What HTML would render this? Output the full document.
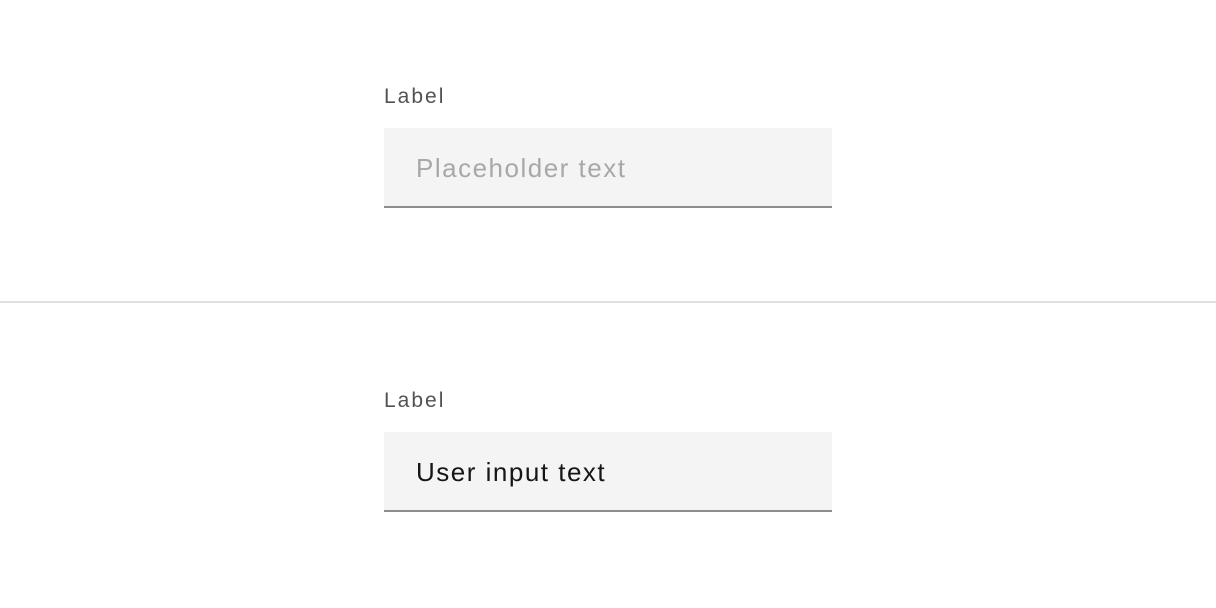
<!DOCTYPE html>
<html><head><style>
html,body{margin:0;padding:0;width:1216px;height:608px;background:#fff;font-family:"Liberation Sans",sans-serif;overflow:hidden}
.lab{position:absolute;left:384px;font-size:21px;color:#525252;letter-spacing:2px}
.inp{position:absolute;left:384px;width:448px;height:78px;background:#f4f4f4;border-bottom:2px solid #8d8d8d}
.inp span{position:absolute;left:32px;top:25px;font-size:26px;letter-spacing:1.5px}
.hr{position:absolute;left:0;top:301px;width:1216px;height:2px;background:#e0e0e0}
</style></head><body>
<div class="lab" style="top:85px">Label</div>
<div class="inp" style="top:128px"><span style="color:#a8a8a8">Placeholder text</span></div>
<div class="hr"></div>
<div class="lab" style="top:389px">Label</div>
<div class="inp" style="top:432px"><span style="color:#161616">User input text</span></div>
</body></html>
